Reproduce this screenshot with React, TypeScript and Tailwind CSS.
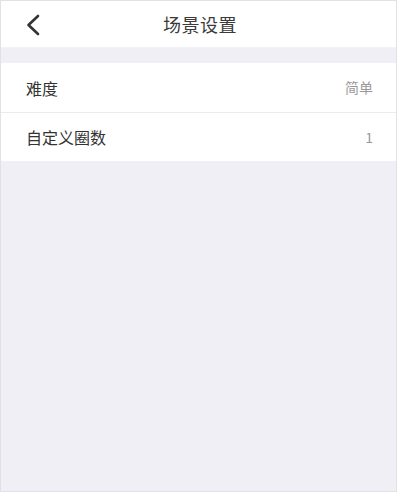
const rows = [
  { label: "难度", value: "简单" },
  { label: "自定义圈数", value: "1" },
];

export default function App() {
  return (
    <div className="w-[400px] h-[495px] bg-white">
      <div
        className="w-[397px] h-[492px] border border-[#e2e2e6] bg-[#f0eff5] flex flex-col"
        style={{ fontFamily: '"Noto Sans CJK SC", "Noto Sans", sans-serif' }}
      >
        <header className="relative h-[47px] bg-white flex items-center justify-center border-b border-[#f3f3f5]">
          <button className="absolute left-[22px] top-[11px] w-[20px] h-[26px] flex items-center justify-center">
            <svg width="16" height="22" viewBox="0 0 16 22" fill="none">
              <path d="M13 2 L3.5 11 L13 20" stroke="#333" strokeWidth="2.6" strokeLinecap="round" strokeLinejoin="round" />
            </svg>
          </button>
          <h1 className="text-[18px] text-[#3a3a3a] tracking-[0.5px] leading-none ml-[3px]">场景设置</h1>
        </header>

        <div className="h-[15px]" />

        <ul className="bg-white">
          {rows.map((r, i) => (
            <li
              key={r.label}
              className={`h-[49px] flex items-center justify-between pl-[25px] pr-[23px] ${
                i > 0 ? "border-t border-[#ebebef]" : ""
              }`}
            >
              <span className="text-[16px] text-[#333]">{r.label}</span>
              <span className="text-[14px] text-[#999]">{r.value}</span>
            </li>
          ))}
        </ul>
      </div>
    </div>
  );
}
